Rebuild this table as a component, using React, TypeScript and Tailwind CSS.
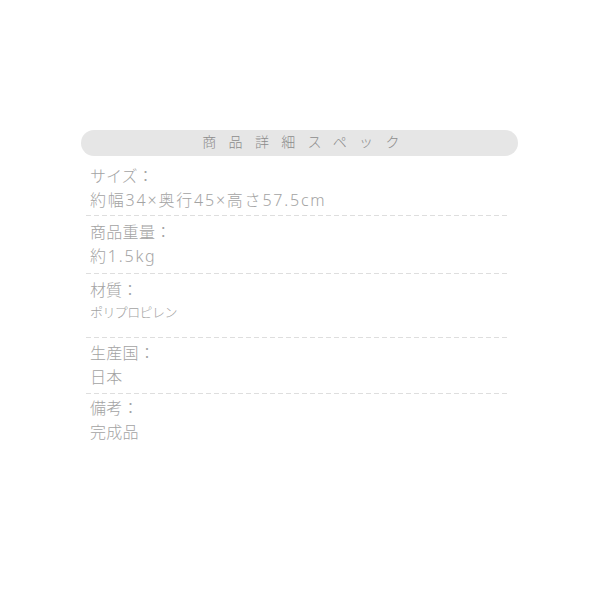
import React from "react";

type Row = {
  label: string;
  value: string;
  wrap: string;
  labelCls: string;
  valueCls: string;
  dash: boolean;
};

const rows: Row[] = [
  {
    label: "サイズ：",
    value: "約幅34×奥行45×高さ57.5cm",
    wrap: "pt-[8px] pb-[3px]",
    labelCls: "leading-[24px]",
    valueCls: "leading-[24px] text-[16px] tracking-[1.8px]",
    dash: true,
  },
  {
    label: "商品重量：",
    value: "約1.5kg",
    wrap: "pt-[4px] pb-[5px]",
    labelCls: "leading-[24px] tracking-[0.3px]",
    valueCls: "leading-[24px] text-[16px] tracking-[1.8px]",
    dash: true,
  },
  {
    label: "材質：",
    value: "ポリプロピレン",
    wrap: "pt-[7px] pb-[13px]",
    labelCls: "leading-[19px]",
    valueCls: "leading-[24px] text-[13px] tracking-[-0.6px]",
    dash: true,
  },
  {
    label: "生産国：",
    value: "日本",
    wrap: "pt-[4px] pb-[4px]",
    labelCls: "leading-[23px] tracking-[0.3px]",
    valueCls: "leading-[24px] text-[16px] tracking-[0.3px]",
    dash: true,
  },
  {
    label: "備考：",
    value: "完成品",
    wrap: "pt-[3px] pb-[4px]",
    labelCls: "leading-[23px] tracking-[0.3px]",
    valueCls: "leading-[24px] text-[16px] tracking-[0.3px]",
    dash: false,
  },
];

export default function App() {
  return (
    <div
      className="w-[600px] h-[600px] bg-white pt-[130px]"
      style={{ fontFamily: '"Noto Sans", "Noto Sans CJK JP", sans-serif' }}
    >
      <div className="w-[437px] ml-[81px]">
        <div className="h-[26px] rounded-full bg-[#e6e6e6] flex justify-center pl-[15px]">
          <span
            className="text-[14px] leading-[22px] tracking-[12.3px] text-[#8c8c8c] font-light"
            style={{ fontFamily: '"Noto Sans CJK JP", sans-serif' }}
          >
            商品詳細スペック
          </span>
        </div>
        <div>
          {rows.map((r) => (
            <div key={r.label}>
              <div className={`pl-[9px] text-[#a3a3a3] font-light ${r.wrap}`}>
                <div className={`text-[16px] ${r.labelCls}`}>{r.label}</div>
                <div className={r.valueCls}>{r.value}</div>
              </div>
              {r.dash && (
                <div className="ml-[5px] mr-[10px] h-px bg-[repeating-linear-gradient(90deg,#dedede_0_5px,transparent_5px_8px)]" />
              )}
            </div>
          ))}
        </div>
      </div>
    </div>
  );
}
